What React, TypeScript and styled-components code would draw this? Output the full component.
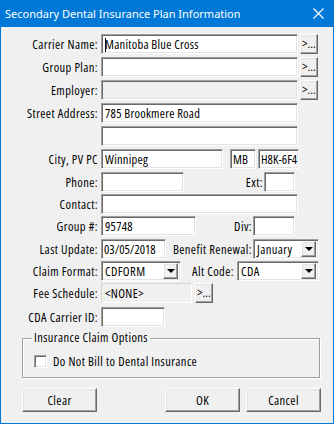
import React from "react";
import styled, { createGlobalStyle } from "styled-components";

const GlobalStyle = createGlobalStyle`
  html, body { margin: 0; padding: 0; background: #ffffff; }
  body {
    font-family: "Open Sans", "Liberation Sans", Arial, sans-serif;
    font-stretch: 80%;
    font-size: 12.5px;
    letter-spacing: 0.4px;
    color: #000;
  }
  * { box-sizing: border-box; }
`;

const Window = styled.div`
  width: 334px;
  height: 424px;
  border: 1px solid #0078d7;
  border-top: none;
  background: #f0f0f0;
  display: flex;
  flex-direction: column;
`;

const TitleBar = styled.div`
  height: 27px;
  margin: 0 -1px;
  background: #0078d7;
  color: #fff;
  font-family: "Noto Sans", "Open Sans", sans-serif;
  font-stretch: 100%;
  letter-spacing: 0;
  font-size: 11px;
  display: flex;
  align-items: center;
  justify-content: space-between;
  padding: 0 10px 0 5px;
`;

const TitleText = styled.span`
  white-space: nowrap;
`;

const Body = styled.div`
  display: flex;
  flex-direction: column;
  padding-top: 7px;
`;

const Row = styled.div<{ $mt: number }>`
  display: flex;
  align-items: center;
  height: 20px;
  margin-top: ${(p) => p.$mt}px;
`;

const Label = styled.span`
  width: 97px;
  margin-right: 3px;
  text-align: right;
  white-space: nowrap;
`;

const InlineLabel = styled.span<{ $w: number; $gap?: number }>`
  width: ${(p) => p.$w}px;
  margin-right: ${(p) => p.$gap ?? 1}px;
  text-align: right;
  white-space: nowrap;
`;

const sunken = `
  border: 1px solid;
  border-color: #a0a0a0 #ffffff #ffffff #a0a0a0;
  box-shadow: inset 1px 1px 0 #696969, inset -1px -1px 0 #e3e3e3;
`;

const raised = `
  border: 1px solid;
  border-color: #ffffff #696969 #696969 #ffffff;
  box-shadow: inset -1px -1px 0 #a0a0a0, inset 1px 1px 0 #e3e3e3;
  background: #f0f0f0;
`;

const TextBox = styled.div<{ $w: number; $ml?: number; $disabled?: boolean; $tight?: boolean }>`
  ${sunken}
  position: relative;
  width: ${(p) => p.$w}px;
  height: 20px;
  margin-left: ${(p) => p.$ml ?? 0}px;
  background: ${(p) => (p.$disabled ? "#f0f0f0" : "#ffffff")};
  padding: 0 1px 0 ${(p) => (p.$tight ? 2 : 3)}px;
  letter-spacing: ${(p) => (p.$tight ? 0 : 0.25)}px;
  display: flex;
  align-items: center;
  white-space: nowrap;
  overflow: hidden;
`;

const Caret = styled.span`
  position: absolute;
  left: 3px;
  top: 3px;
  width: 1px;
  height: 14px;
  background: #000;
`;

const ReadOnlyBox = styled.div<{ $w: number }>`
  width: ${(p) => p.$w}px;
  height: 20px;
  border: 1px solid;
  border-color: #d4d4d4 #ffffff #ffffff #d4d4d4;
  padding: 0 3px;
  display: flex;
  align-items: center;
`;

const SmallButton = styled.div<{ $ml: number }>`
  ${raised}
  width: 18px;
  height: 20px;
  margin-left: ${(p) => p.$ml}px;
  display: flex;
  align-items: center;
  justify-content: center;
  letter-spacing: 0;
  padding-bottom: 2px;
`;

const Combo = styled.div<{ $w: number }>`
  ${sunken}
  width: ${(p) => p.$w}px;
  height: 20px;
  background: #fff;
  display: flex;
  align-items: center;
  padding: 2px 2px 2px 3px;
`;

const ComboText = styled.span`
  flex: 1;
  white-space: nowrap;
`;

const ArrowButton = styled.span`
  ${raised}
  width: 15px;
  height: 16px;
  display: flex;
  align-items: center;
  justify-content: center;
`;

const Arrow = styled.span`
  width: 0;
  height: 0;
  border-left: 4px solid transparent;
  border-right: 4px solid transparent;
  border-top: 4px solid #000;
`;

const GroupBox = styled.fieldset`
  margin: 5px 0 0 21px;
  width: 298px;
  height: 46px;
  padding: 9px 0 0 11px;
  border: 1px solid #a0a0a0;
  box-shadow: inset 1px 1px 0 #fff, 1px 1px 0 #fff;
  display: block;
`;

const Legend = styled.legend`
  padding: 0 2px;
  margin-left: -2px;
  line-height: 12px;
`;

const CheckRow = styled.label`
  display: flex;
  align-items: center;
  gap: 6px;
`;

const CheckBox = styled.span`
  ${sunken}
  width: 13px;
  height: 13px;
  background: #fff;
`;

const ButtonBar = styled.div`
  display: flex;
  gap: 6px;
  margin: 10px 0 0 21px;
  width: 299px;
`;

const PushButton = styled.div<{ $push?: boolean }>`
  ${raised}
  width: 75px;
  height: 24px;
  margin-left: ${(p) => (p.$push ? "auto" : "0")};
  display: flex;
  align-items: center;
  justify-content: center;
`;

const CloseIcon = () => (
  <svg width="11" height="11" viewBox="0 0 11 11">
    <path d="M0.5 0.5 L10.5 10.5 M10.5 0.5 L0.5 10.5" stroke="#fff" strokeWidth="1.1" />
  </svg>
);

const DropDown = ({ w, text }: { w: number; text: string }) => (
  <Combo $w={w}>
    <ComboText>{text}</ComboText>
    <ArrowButton>
      <Arrow />
    </ArrowButton>
  </Combo>
);

export default function App() {
  return (
    <>
      <GlobalStyle />
      <Window>
        <TitleBar>
          <TitleText>Secondary Dental Insurance Plan Information</TitleText>
          <CloseIcon />
        </TitleBar>
        <Body>
          <Row $mt={0}>
            <Label>Carrier Name:</Label>
            <TextBox $w={197}>
              <Caret />
              Manitoba Blue Cross
            </TextBox>
            <SmallButton $ml={2}>&gt;...</SmallButton>
          </Row>
          <Row $mt={3}>
            <Label>Group Plan:</Label>
            <TextBox $w={197} />
            <SmallButton $ml={2}>&gt;...</SmallButton>
          </Row>
          <Row $mt={3}>
            <Label>Employer:</Label>
            <TextBox $w={197} $disabled />
            <SmallButton $ml={2}>&gt;...</SmallButton>
          </Row>
          <Row $mt={3}>
            <Label>Street Address:</Label>
            <TextBox $w={197}>785 Brookmere Road</TextBox>
          </Row>
          <Row $mt={3}>
            <Label />
            <TextBox $w={197} />
          </Row>
          <Row $mt={3}>
            <Label>City, PV PC</Label>
            <TextBox $w={122}>Winnipeg</TextBox>
            <TextBox $w={26} $ml={7} $tight>MB</TextBox>
            <TextBox $w={41} $ml={2} $tight>H8K-6F4</TextBox>
          </Row>
          <Row $mt={3}>
            <Label>Phone:</Label>
            <TextBox $w={83} />
            <InlineLabel $w={79} $gap={1}>Ext:</InlineLabel>
            <TextBox $w={31} />
          </Row>
          <Row $mt={2}>
            <Label>Contact:</Label>
            <TextBox $w={197} />
          </Row>
          <Row $mt={2}>
            <Label>Group #:</Label>
            <TextBox $w={95}>95748</TextBox>
            <InlineLabel $w={56} $gap={1}>Div:</InlineLabel>
            <TextBox $w={42} />
          </Row>
          <Row $mt={3}>
            <Label>Last Update:</Label>
            <TextBox $w={65} $tight>03/05/2018</TextBox>
            <InlineLabel $w={86} $gap={1}>Benefit Renewal:</InlineLabel>
            <DropDown w={66} text="January" />
          </Row>
          <Row $mt={2}>
            <Label>Claim Format:</Label>
            <DropDown w={80} text="CDFORM" />
            <InlineLabel $w={53} $gap={3}>Alt Code:</InlineLabel>
            <DropDown w={82} text="CDA" />
          </Row>
          <Row $mt={2}>
            <Label>Fee Schedule:</Label>
            <ReadOnlyBox $w={91}>&lt;NONE&gt;</ReadOnlyBox>
            <SmallButton $ml={3}>&gt;...</SmallButton>
          </Row>
          <Row $mt={4}>
            <Label>CDA Carrier ID:</Label>
            <TextBox $w={64} />
          </Row>
          <GroupBox>
            <Legend>Insurance Claim Options</Legend>
            <CheckRow>
              <CheckBox />
              Do Not Bill to Dental Insurance
            </CheckRow>
          </GroupBox>
          <ButtonBar>
            <PushButton>Clear</PushButton>
            <PushButton $push>OK</PushButton>
            <PushButton>Cancel</PushButton>
          </ButtonBar>
        </Body>
      </Window>
    </>
  );
}
